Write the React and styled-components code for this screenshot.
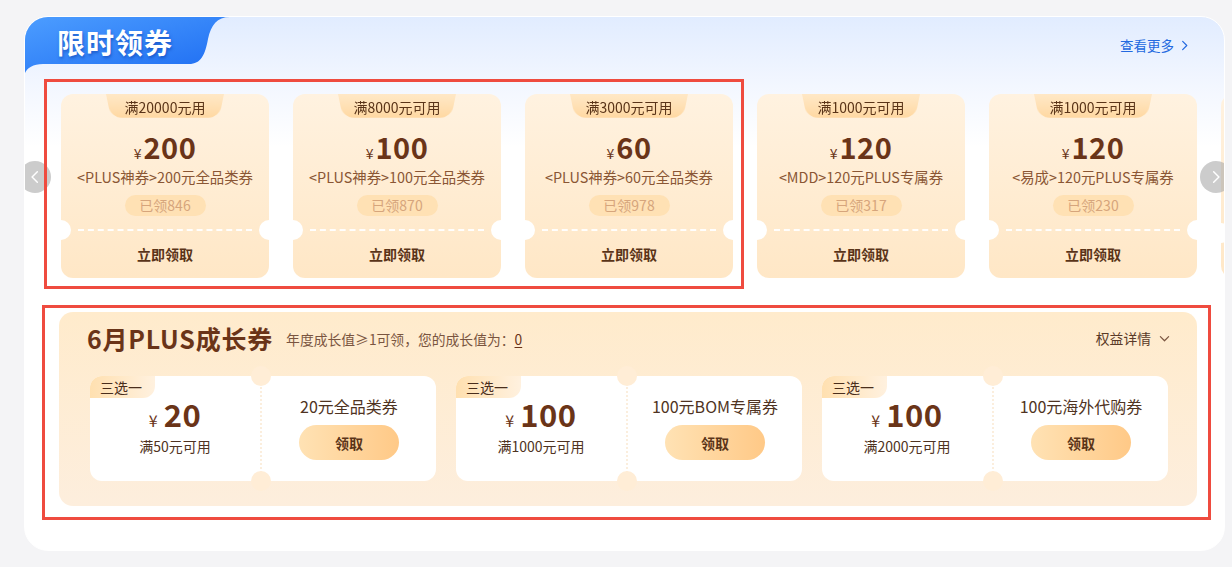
import React from "react";
import styled, { createGlobalStyle } from "styled-components";

const Global = createGlobalStyle`
  html, body { margin: 0; padding: 0; background: #f4f4f6; }
  body { font-family: "Noto Sans CJK SC", "Noto Sans", sans-serif; }
  * { box-sizing: border-box; }
`;

const Page = styled.div`
  width: 1232px;
  height: 567px;
  padding: 16px 0 0 24px;
  overflow: hidden;
`;

const Card = styled.section`
  position: relative;
  width: 1201px;
  height: 535px;
  border-radius: 24px;
  border: 1px solid #fff;
  overflow: hidden;
  background: linear-gradient(180deg, #e1ecff 0px, #f3f7ff 70px, #ffffff 130px, #ffffff 100%);
`;

const Header = styled.div`
  display: flex;
  justify-content: space-between;
  align-items: flex-start;
  height: 62px;
`;

const Tab = styled.div`
  position: relative;
  width: 210px;
  height: 56px;
  padding: 7px 0 0 32px;
`;

const TabShape = styled.svg`
  position: absolute;
  left: 0;
  top: 0;
`;

const Title = styled.h1`
  position: relative;
  margin: 0;
  font-size: 28px;
  line-height: 36px;
  font-weight: 700;
  color: #fff;
  letter-spacing: 1px;
  text-shadow: 1px 2px 3px rgba(10, 60, 170, 0.55);
`;

const More = styled.a`
  display: flex;
  align-items: center;
  gap: 5px;
  margin: 18px 34px 0 0;
  font-size: 13.5px;
  color: #2369e0;
  text-decoration: none;
`;

const Track = styled.div`
  display: flex;
  gap: 24px;
  padding: 15px 0 0 36px;
`;

const Coupon = styled.div`
  position: relative;
  flex: 0 0 208px;
  height: 184px;
  border-radius: 12px;
  background: linear-gradient(180deg, #fff2e0 0%, #ffe7c6 100%);
  display: flex;
  flex-direction: column;
  align-items: center;
`;

const Cond = styled.div`
  position: relative;
  width: 118px;
  height: 26px;
  font-size: 14px;
  line-height: 26px;
  color: #5a3418;
  text-align: center;
  white-space: nowrap;
  &::before {
    content: "";
    position: absolute;
    inset: 0;
    border-radius: 0 0 12px 12px;
    background: linear-gradient(180deg, #ffe8c6 0%, #ffd8a2 100%);
    transform: perspective(30px) rotateX(-6deg);
    transform-origin: top;
  }
  span { position: relative; }
`;

const Amount = styled.div`
  display: flex;
  align-items: baseline;
  gap: 2px;
  margin-top: 10px;
  height: 32px;
  color: #6a3418;
`;

const Yen = styled.span`
  font-size: ${(p) => p.$size || 14}px;
  font-weight: 400;
`;

const Num = styled.span`
  font-size: ${(p) => p.$size || 29}px;
  line-height: 32px;
  font-weight: 700;
  letter-spacing: 0.5px;
`;

const Desc = styled.div`
  margin-top: 5px;
  font-size: 14.4px;
  line-height: 20px;
  color: #8a5634;
  white-space: nowrap;
`;

const Claimed = styled.div`
  margin-top: 8px;
  width: 81px;
  height: 21px;
  border-radius: 11px;
  background: #ffe1b4;
  color: #d6a57c;
  font-size: 14px;
  line-height: 21px;
  text-align: center;
`;

const Cut = styled.div`
  position: relative;
  align-self: stretch;
  margin-top: ${(p) => p.$top || 13}px;
  height: 2px;
  &::after {
    content: "";
    position: absolute;
    left: 17px;
    right: 17px;
    top: 0;
    border-top: 2px dashed rgba(255, 255, 255, 0.95);
  }
`;

const Notch = styled.span`
  position: absolute;
  top: -9px;
  ${(p) => (p.$side === "left" ? "left: -10px;" : "right: -10px;")}
  width: 20px;
  height: 20px;
  border-radius: 50%;
  background: #fff;
`;

const Grab = styled.div`
  margin-top: 13px;
  font-size: 14px;
  font-weight: 700;
  color: #5a3418;
`;

const Arrow = styled.div`
  position: absolute;
  top: 144px;
  ${(p) => (p.$side === "left" ? "left: -6px;" : "left: 1175px;")}
  width: 32px;
  height: 32px;
  border-radius: 50%;
  background: rgba(170, 170, 170, 0.6);
  display: flex;
  align-items: center;
  justify-content: center;
`;

const Highlight = styled.div`
  position: absolute;
  left: ${(p) => p.$l}px;
  top: ${(p) => p.$t}px;
  width: ${(p) => p.$w}px;
  height: ${(p) => p.$h}px;
  border: 3px solid #ef4b3f;
  pointer-events: none;
`;

const Panel = styled.div`
  margin: 34px 0 0 34px;
  width: 1138px;
  height: 194px;
  border-radius: 14px;
  background: linear-gradient(180deg, #ffebcc 0%, #fdeedd 100%);
  padding: 9px 29px 0 28px;
`;

const PanelHead = styled.div`
  display: flex;
  align-items: center;
  height: 34px;
`;

const PanelTitle = styled.h2`
  margin: 0;
  font-size: 25px;
  font-weight: 700;
  color: #6a3418;
  letter-spacing: 0.8px;
`;

const Sub = styled.div`
  margin-left: 13px;
  margin-top: 2px;
  font-size: 13.8px;
  color: #7a5540;
  u { color: #6a3418; text-underline-offset: 2px; }
`;

const Details = styled.div`
  margin-left: auto;
  display: flex;
  align-items: center;
  gap: 8px;
  font-size: 13.8px;
  color: #5a3a28;
  margin-right: -2px;
`;

const Row = styled.div`
  display: flex;
  gap: 20px;
  margin-top: 21px;
  padding-left: 3px;
`;

const Small = styled.div`
  position: relative;
  width: 346px;
  height: 105px;
  border-radius: 12px;
  background: #fff;
  display: grid;
  grid-template-columns: 172px 1fr;
`;

const Tag = styled.div`
  position: absolute;
  left: 0;
  top: 0;
  width: 65px;
  height: 22px;
  border-radius: 12px 0 12px 0;
  background: linear-gradient(90deg, #ffe0b0 0%, #fff1df 100%);
  font-size: 14px;
  line-height: 22px;
  padding-left: 10px;
  color: #4a2e1c;
`;

const Left = styled.div`
  display: flex;
  flex-direction: column;
  align-items: center;
  padding-top: 22px;
  border-right: 2px dotted #fbeedd;
  color: #6a3418;
`;

const SmallAmount = styled.div`
  display: flex;
  align-items: baseline;
  gap: 6px;
  height: 36px;
`;

const SmallCond = styled.div`
  margin-top: 2px;
  font-size: 14px;
  color: #4f3322;
`;

const Right = styled.div`
  position: relative;
  display: flex;
  flex-direction: column;
  align-items: center;
  padding-top: 19px;
`;

const Hole = styled.span`
  position: absolute;
  left: -11px;
  ${(p) => (p.$pos === "top" ? "top: -10px;" : "bottom: -10px;")}
  width: 20px;
  height: 20px;
  border-radius: 50%;
  background: #ffedd6;
`;

const RightTitle = styled.div`
  font-size: 16px;
  color: #4f3322;
  line-height: 22px;
`;

const Btn = styled.button`
  margin-top: 8px;
  width: 100px;
  height: 35px;
  border: none;
  border-radius: 18px;
  background: linear-gradient(90deg, #ffe2b4 0%, #ffc987 100%);
  font-family: inherit;
  font-size: 14px;
  font-weight: 700;
  color: #5a3418;
`;

const coupons = [
  { cond: "满20000元用", amt: "200", desc: "<PLUS神券>200元全品类券", n: 846 },
  { cond: "满8000元可用", amt: "100", desc: "<PLUS神券>100元全品类券", n: 870 },
  { cond: "满3000元可用", amt: "60", desc: "<PLUS神券>60元全品类券", n: 978 },
  { cond: "满1000元可用", amt: "120", desc: "<MDD>120元PLUS专属券", n: 317 },
  { cond: "满1000元可用", amt: "120", desc: "<易成>120元PLUS专属券", n: 230 },
];

const growth = [
  { amt: "20", cond: "满50元可用", title: "20元全品类券" },
  { amt: "100", cond: "满1000元可用", title: "100元BOM专属券" },
  { amt: "100", cond: "满2000元可用", title: "100元海外代购券" },
];

const Chevron = ({ dir = "right", color = "#fff", size = 12 }) => (
  <svg width={size} height={size} viewBox="0 0 12 12" fill="none">
    <path
      d={dir === "right" ? "M4 1.5 L8.5 6 L4 10.5" : dir === "left" ? "M8 1.5 L3.5 6 L8 10.5" : "M1.5 4 L6 8.5 L10.5 4"}
      stroke={color}
      strokeWidth="1.3"
      strokeLinecap="round"
      strokeLinejoin="round"
    />
  </svg>
);

export default function App() {
  return (
    <Page>
      <Global />
      <Card>
        <Header>
          <Tab>
            <TabShape width="210" height="56" viewBox="0 0 210 56">
              <defs>
                <linearGradient id="tabg" x1="0" y1="0" x2="1" y2="1">
                  <stop offset="0" stopColor="#4c9dff" />
                  <stop offset="1" stopColor="#1d6cf2" />
                </linearGradient>
              </defs>
              <path
                d="M0 0 H205 C192 0 186 8 183 22 C180 38 176 47 164 47 H18 C8 47 2 51 0 56 Z"
                fill="url(#tabg)"
              />
            </TabShape>
            <Title>限时领券</Title>
          </Tab>
          <More href="#">
            查看更多
            <Chevron color="#2369e0" size={11} />
          </More>
        </Header>

        <Track>
          {coupons.map((c, i) => (
            <Coupon key={i}>
              <Cond>
                <span>{c.cond}</span>
              </Cond>
              <Amount>
                <Yen>¥</Yen>
                <Num>{c.amt}</Num>
              </Amount>
              <Desc>{c.desc}</Desc>
              <Claimed>已领{c.n}</Claimed>
              <Cut>
                <Notch $side="left" />
                <Notch $side="right" />
              </Cut>
              <Grab>立即领取</Grab>
            </Coupon>
          ))}
          <Coupon aria-hidden="true">
            <Cut $top={138}>
              <Notch $side="left" />
            </Cut>
          </Coupon>
        </Track>

        <Arrow $side="left">
          <Chevron dir="left" size={14} />
        </Arrow>
        <Arrow $side="right">
          <Chevron dir="right" size={14} />
        </Arrow>

        <Panel>
          <PanelHead>
            <PanelTitle>6月PLUS成长券</PanelTitle>
            <Sub>
              年度成长值≥1可领，您的成长值为：<u>0</u>
            </Sub>
            <Details>
              权益详情
              <Chevron dir="down" color="#7a5540" size={11} />
            </Details>
          </PanelHead>
          <Row>
            {growth.map((g, i) => (
              <Small key={i}>
                <Tag>三选一</Tag>
                <Left>
                  <SmallAmount>
                    <Yen $size={16}>¥</Yen>
                    <Num $size={31}>{g.amt}</Num>
                  </SmallAmount>
                  <SmallCond>{g.cond}</SmallCond>
                </Left>
                <Right>
                  <Hole $pos="top" />
                  <Hole $pos="bottom" />
                  <RightTitle>{g.title}</RightTitle>
                  <Btn>领取</Btn>
                </Right>
              </Small>
            ))}
          </Row>
        </Panel>

        <Highlight $l={19} $t={62} $w={700} $h={210} />
        <Highlight $l={17} $t={288} $w={1169} $h={215} />
      </Card>
    </Page>
  );
}
